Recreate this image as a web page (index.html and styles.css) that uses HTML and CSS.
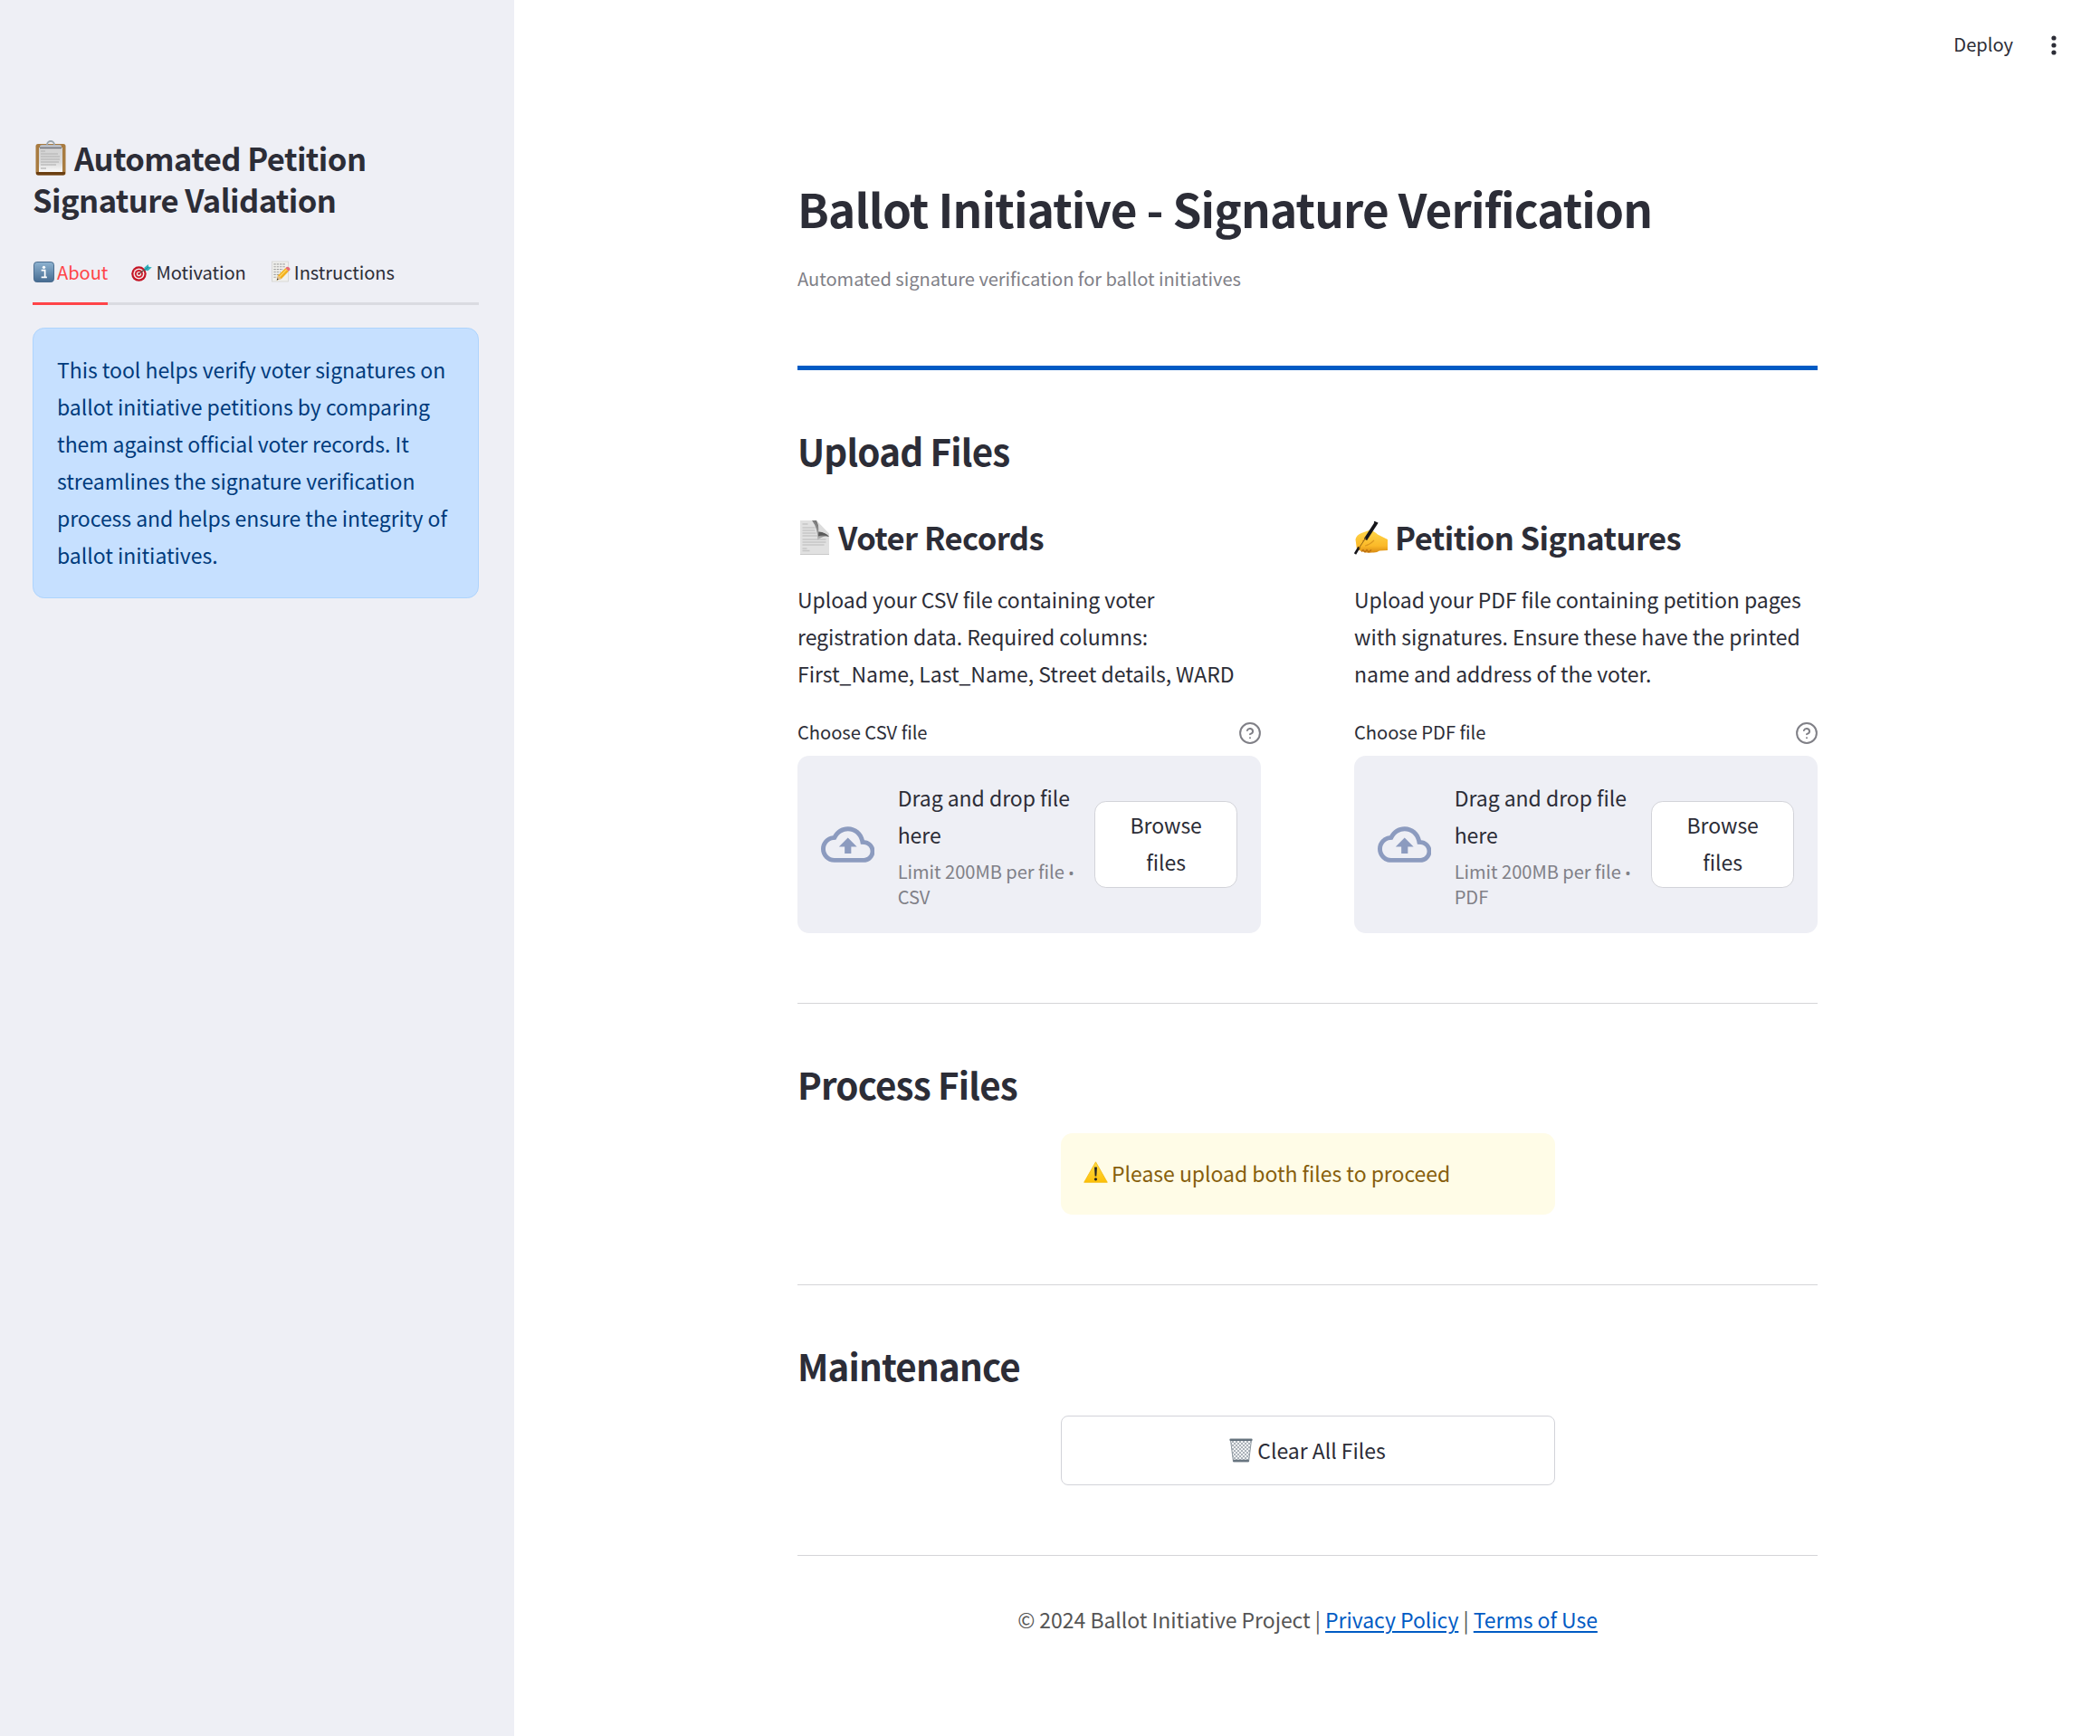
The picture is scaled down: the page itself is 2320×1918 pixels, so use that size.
FILE: index.html
```html
<!DOCTYPE html>
<html lang="en">
<head>
<meta charset="utf-8">
<title>Ballot Initiative</title>
<link rel="stylesheet" href="styles.css">
</head>
<body>
<svg class="defs" width="0" height="0" aria-hidden="true">
  <defs>
    <linearGradient id="paper" x1="0" y1="0" x2="0" y2="1"><stop offset="0" stop-color="#d2d2d2"/><stop offset=".6" stop-color="#dadada"/><stop offset="1" stop-color="#fafafa"/></linearGradient>
    <linearGradient id="info" x1="0" y1="0" x2="0" y2="1"><stop offset="0" stop-color="#8fb3d1"/><stop offset="1" stop-color="#456b91"/></linearGradient>
    <linearGradient id="curl" x1="0" y1="1" x2="1" y2="0"><stop offset="0" stop-color="#e4e4e4"/><stop offset=".45" stop-color="#8a8a8a"/><stop offset="1" stop-color="#444"/></linearGradient>
    <linearGradient id="hand" x1="0" y1="0" x2="0" y2="1"><stop offset="0" stop-color="#ffd64a"/><stop offset=".7" stop-color="#fbb928"/><stop offset="1" stop-color="#d98a12"/></linearGradient>
    <linearGradient id="warn" x1="0" y1="0" x2="0" y2="1"><stop offset="0" stop-color="#ffda45"/><stop offset="1" stop-color="#fdc009"/></linearGradient>
    <pattern id="mesh" width="4" height="4" patternUnits="userSpaceOnUse"><path d="M0 0l4 4M4 0l-4 4" stroke="#98a0a8" stroke-width=".8"/></pattern>
    <symbol id="cloud" viewBox="0 4 24 16"><path d="M19.35 10.04C18.67 6.59 15.64 4 12 4 9.11 4 6.6 5.64 5.35 8.04 2.34 8.36 0 10.91 0 14c0 3.31 2.69 6 6 6h13c2.76 0 5-2.24 5-5 0-2.64-2.05-4.78-4.65-4.96zM19 18H6c-2.21 0-4-1.79-4-4 0-2.05 1.53-3.76 3.56-3.97l1.07-.11.5-.95C8.08 7.14 9.94 6 12 6c2.62 0 4.88 1.86 5.39 4.43l.3 1.5 1.53.11c1.56.1 2.78 1.41 2.78 2.96 0 1.65-1.35 3-3 3zM8 13h2.55v3h2.9v-3H16l-4-4z"/></symbol>
    <symbol id="help" viewBox="0 0 24 24"><g fill="none" stroke="#808087" stroke-width="2" stroke-linecap="round" stroke-linejoin="round"><circle cx="12" cy="12" r="10.9"/><path d="M8.9 9a3.2 3.2 0 0 1 6.2 1c0 2.1-3.1 3.1-3.1 3.1"/><path d="M12 17.3h.01"/></g></symbol>
  </defs>
</svg>
<div class="app">
  <aside class="sidebar">
    <h2 class="brand"><svg class="icon clipboard" viewBox="0 0 34 38"><rect x=".5" y="3" width="33" height="34.5" rx="2.5" fill="#a87b40"/><path d="M1 34h32v1.5a2 2 0 0 1-2 2H3a2 2 0 0 1-2-2z" fill="#6b3f12"/><rect x="4" y="7" width="26" height="27" fill="url(#paper)"/><path d="M6 11h5M6 14h19M6 17h21M6 20h21M6 23h20M6 26h17M6 30h6" stroke="#bdbdbd" stroke-width="1.3"/><path d="M13 4a4 4 0 0 1 8 0" fill="none" stroke="#9aa5ad" stroke-width="1.8"/><path d="M5 8V6q0-2 2-2h20q2 0 2 2v2z" fill="#b9bcc3"/><path d="M5 7.5h24" stroke="#6d6f76" stroke-width="1.3"/></svg>Automated Petition Signature Validation</h2>
    <nav class="tabs">
      <a class="tab active"><svg class="icon info-icon" viewBox="0 0 24 24"><rect x=".5" y=".5" width="23" height="23" rx="3.5" fill="url(#info)" stroke="#46698c"/><circle cx="12" cy="6.6" r="1.7" fill="#fff"/><path d="M9 10h4.2v8M9 18.2h6.5" fill="none" stroke="#fff" stroke-width="1.8"/></svg>About</a>
      <a class="tab"><svg class="icon target" viewBox="0 0 24 21"><circle cx="8.8" cy="11.6" r="8.6" fill="#c41425"/><circle cx="8.8" cy="11.6" r="6.3" fill="#f4e9ea"/><circle cx="8.8" cy="11.6" r="4.7" fill="#cf1d2e"/><circle cx="8.8" cy="11.6" r="2.7" fill="#f7eeee"/><circle cx="8.8" cy="11.6" r="1.3" fill="#b91020"/><path d="M9 11.5L18 4.5" stroke="#6b4a45" stroke-width="1.5"/><path d="M15 4.5L19.5.5l.5 3 3.8.5-4.6 4.2-3.6-.8z" fill="#33b2bd"/><path d="M15.8 7l4.2-3.5" stroke="#177b87" stroke-width=".9"/></svg>Motivation</a>
      <a class="tab"><svg class="icon memo" viewBox="0 0 22 24"><rect x=".5" y=".5" width="19" height="23" fill="#f0f0ed" stroke="#d2d2d0" stroke-width=".8"/><path d="M2.5 3.5h13M2.5 6.5h14M2.5 9.5h11M2.5 12.5h8M2.5 15.5h6M2.5 18.5h5" stroke="#a3a3a3" stroke-width="1.2" stroke-dasharray="2.5 1"/><path d="M6 22l1.5-5.5L16 8l3.8 3.7-8.3 8.6z" fill="#f2b01e"/><path d="M9 18.3l8.5-8.7" stroke="#ffd867" stroke-width="1.2"/><path d="M16 8l1.8-1.6q3.8.4 3.7 3.6l-1.7 1.7z" fill="#e56b75"/><path d="M6 22l1.5-5.5 4 3.8z" fill="#e2c08d"/><path d="M6 22l.6-2.2 1.6 1.4z" fill="#333"/></svg>Instructions</a>
    </nav>
    <div class="about">This tool helps verify voter signatures on ballot initiative petitions by comparing them against official voter records. It streamlines the signature verification process and helps ensure the integrity of ballot initiatives.</div>
  </aside>

  <div class="page">
    <header class="toolbar">
      <span class="deploy">Deploy</span>
      <svg class="dots" viewBox="0 0 6 24"><circle cx="3" cy="4" r="2.6"/><circle cx="3" cy="12" r="2.6"/><circle cx="3" cy="20" r="2.6"/></svg>
    </header>
    <main class="content">
      <h1>Ballot Initiative - Signature Verification</h1>
      <p class="caption">Automated signature verification for ballot initiatives</p>
      <hr class="accent">
      <h2 class="section">Upload Files</h2>
      <div class="columns">
        <section class="column">
          <h3><svg class="icon page-icon" viewBox="0 0 32 38"><path d="M0 0h17.5L32 16v22H0z" fill="#e1e1e1"/><path d="M2.5 4h6M2.5 8h14M2.5 11h14M2.5 14h15M2.5 17h17M2.5 21h26M2.500 24h26M2.5 27h24M2.5 31h5M2.5 33.5h8" stroke="#c6c6c6" stroke-width="1.3"/><path d="M13 0h5q3 5 2.5 12.500Q28 13 32 18q-7-2-13 4Q20 9 13 0z" fill="url(#curl)"/><path d="M18 0l14 14.500V18q-4-5-11.500-5.500Q21 5 18 0z" fill="#dcdcdc"/><path d="M20.500 12.500q7.500.5 11.500 5.500-6-2.500-12-.5z" fill="#5a5a5a"/><path d="M0 37.500h32" stroke="#c9c9c9"/></svg>Voter Records</h3>
          <p class="text">Upload your CSV file containing voter registration data. Required columns: First_Name, Last_Name, Street details, WARD</p>
          <div class="label"><span>Choose CSV file</span><svg class="help"><use href="#help"/></svg></div>
          <div class="dropzone">
            <svg class="cloud"><use href="#cloud"/></svg>
            <div class="hint"><div>Drag and drop file here</div><small>Limit 200MB per file <span class="dot">•</span> CSV</small></div>
            <button class="browse">Browse files</button>
          </div>
        </section>
        <section class="column">
          <h3><svg class="icon writing" viewBox="0 0 38 37"><path d="M3 31L1.500 20Q2.500 15 8 13l9-3.200q3-.3 5 1.700 2 1 4 3l11 5.500v12l-9 .5q-3 2.500-8 2-5 .5-9-.5z" fill="url(#hand)"/><path d="M9 22q4-2 7-6M12 27q5-1 10-6" fill="none" stroke="#dc981f" stroke-width="1.100"/><path d="M8 33.500l2-2 2 2.500 2-2.500 2 2.500 3-2.500" fill="none" stroke="#b86d10" stroke-width="1.100"/><path d="M24.500 1.500L12.500 20" stroke="#15151a" stroke-width="3.800"/><path d="M22 .5l4.200 1.800" stroke="#15151a" stroke-width="1.500"/><path d="M5.500 28.500L1 36" stroke="#15151a" stroke-width="2.600"/><path d="M13 18L5 30" stroke="#8f6110" stroke-width="1"/></svg>Petition Signatures</h3>
          <p class="text">Upload your PDF file containing petition pages with signatures. Ensure these have the printed name and address of the voter.</p>
          <div class="label"><span>Choose PDF file</span><svg class="help"><use href="#help"/></svg></div>
          <div class="dropzone">
            <svg class="cloud"><use href="#cloud"/></svg>
            <div class="hint"><div>Drag and drop file here</div><small>Limit 200MB per file <span class="dot">•</span> PDF</small></div>
            <button class="browse">Browse files</button>
          </div>
        </section>
      </div>
      <hr>
      <h2 class="section">Process Files</h2>
      <div class="warning"><svg class="icon warn-icon" viewBox="0 0 27 24"><path d="M13.500.8L26.300 23.300H.7z" fill="url(#warn)" stroke="#f4b90a" stroke-width=".8" stroke-linejoin="round"/><path d="M12 6.500h3l-.7 10h-1.600z" fill="#252525"/><circle cx="13.500" cy="19.800" r="1.600" fill="#252525"/></svg>Please upload both files to proceed</div>
      <hr>
      <h2 class="section">Maintenance</h2>
      <button class="clear"><svg class="icon trash" viewBox="0 0 26 27"><path d="M1.500 2h23L21.500 26h-17z" fill="#f1f3f4"/><path d="M1.500 2h23L21.500 26h-17z" fill="url(#mesh)" stroke="#8d979f"/><rect x=".4" y=".4" width="25.200" height="2.600" rx="1" fill="#65727d"/><path d="M4.300 24.800h17.400" stroke="#65727d" stroke-width="2.200"/></svg>Clear All Files</button>
      <hr>
      <footer>© 2024 Ballot Initiative Project | <a href="#">Privacy Policy</a> | <a href="#">Terms of Use</a></footer>
    </main>
  </div>
</div>
</body>
</html>
```
FILE: styles.css
```css
* { box-sizing: border-box; }

body {
  margin: 0;
  background: #fff;
  color: #2c2d37;
  font: 400 23px/41px "Noto Sans CJK SC", "Noto Sans", sans-serif;
  letter-spacing: -.04px;
}

h1, h2, h3, p, hr { margin: 0; }
h1, h2, h3 { font-weight: 700; }

.defs { display: block; height: 0; }
.icon { display: inline-block; overflow: visible; }

.app { display: flex; height: 1918px; }

/* Sidebar */
.sidebar {
  flex: 0 0 568px;
  padding: 151px 39px 0 36px;
  background: #eeeff5;
}
.brand { font-size: 34.56px; line-height: 46px; letter-spacing: -.55px; }
.clipboard { width: 34px; height: 38px; margin: 0 9px 0 3px; vertical-align: -5px; }

.tabs {
  display: flex;
  gap: 26px;
  margin-top: 40px;
  border-bottom: 3px solid #dadbe1;
  font-size: 20.1px;
  line-height: 36px;
}
.tab { padding-bottom: 15px; margin-bottom: -3px; border-bottom: 3px solid transparent; white-space: nowrap; }
.tab.active { color: #ff4448; border-color: #ff4448; }
.info-icon { width: 23px; height: 23px; margin: 0 3px 0 1px; vertical-align: -3px; }
.target { width: 23px; height: 21px; margin: 0 4px 0 0; vertical-align: -3px; }
.memo { width: 21px; height: 24px; margin: 0 4px 0 2px; vertical-align: -3px; }

.about {
  height: 299px;
  margin-top: 25px;
  padding: 24.5px 20px 0 26px;
  border: 1px solid #aed4fd;
  border-radius: 12.8px;
  background: #c6e0ff;
  color: #003b7c;
}

/* Main area */
.page { flex: 1; display: flex; flex-direction: column; }
.toolbar {
  display: flex;
  justify-content: flex-end;
  align-items: center;
  height: 100px;
  padding-right: 48px;
  gap: 42px;
  font-size: 20.16px;
}
.deploy { padding-bottom: 3px; }
.dots { width: 6px; height: 24px; fill: #2c2d37; }

.content { width: 1127px; margin: 96px 0 0 313px; }
h1 { font-size: 51.2px; line-height: 69px; letter-spacing: -.82px; }
.caption { margin-top: 25px; font-size: 20.1px; line-height: 36px; color: #808087; }

hr { height: 1px; margin-top: 77px; border: 0; background: #d5d5d8; }
hr.accent { height: 5px; margin-top: 78px; background: #005bc4; }

.section { margin-top: 62px; font-size: 40.32px; line-height: 54px; letter-spacing: -.83px; }

.columns { display: flex; justify-content: space-between; margin-top: 45px; }
.column { width: 512px; }
h3 { font-size: 34.56px; line-height: 46px; letter-spacing: -.55px; white-space: nowrap; }
.page-icon { width: 32px; height: 38px; margin: 0 10px 0 3px; vertical-align: -5px; }
.writing { width: 38px; height: 37px; margin: 0 7px 0 0; vertical-align: -5px; }
.text { margin-top: 26px; }
.label {
  display: flex;
  justify-content: space-between;
  align-items: center;
  height: 36px;
  margin-top: 25px;
  font-size: 20.16px;
}
.help { width: 24px; height: 24px; margin-top: 4px; }

.dropzone {
  display: flex;
  align-items: center;
  gap: 25.6px;
  height: 196px;
  margin-top: 9px;
  padding: 0 25.6px;
  border-radius: 12.8px;
  background: #eeeff5;
}
.cloud { flex: none; width: 59.5px; height: 40px; fill: #8c9bbf; }
.hint { flex: 1; margin-right: -15px; }
.hint small { display: block; margin-top: 6px; font-size: 20.1px; line-height: 28px; color: #808087; }
.dot { font-family: "Noto Sans", sans-serif; font-size: 17px; line-height: 1; }

button {
  border: 1px solid #d2d3d9;
  background: #fff;
  color: #2c2d37;
  font: inherit;
  letter-spacing: inherit;
}
.browse { flex: none; width: 158.5px; height: 96px; padding: 0 30px 3px; border-radius: 12.8px; }

.warning, .clear { display: block; width: 546px; margin: 28px auto 0; }
.warning {
  height: 90px;
  margin-top: 27px;
  padding: 24px 25.6px 0;
  border-radius: 12.8px;
  background: #fffce7;
  color: #875f0c;
}
.warn-icon { width: 27px; height: 24px; margin: 0 4px 0 0; vertical-align: -1px; }

.clear { height: 77px; padding: 0; border-radius: 8px; }
.trash { width: 26px; height: 27px; margin-right: 5px; vertical-align: -4px; }

footer { margin-top: 50px; text-align: center; color: #555; }
footer a { color: #005bc4; text-decoration: underline; text-decoration-thickness: 2px; text-underline-offset: 3px; }
```
